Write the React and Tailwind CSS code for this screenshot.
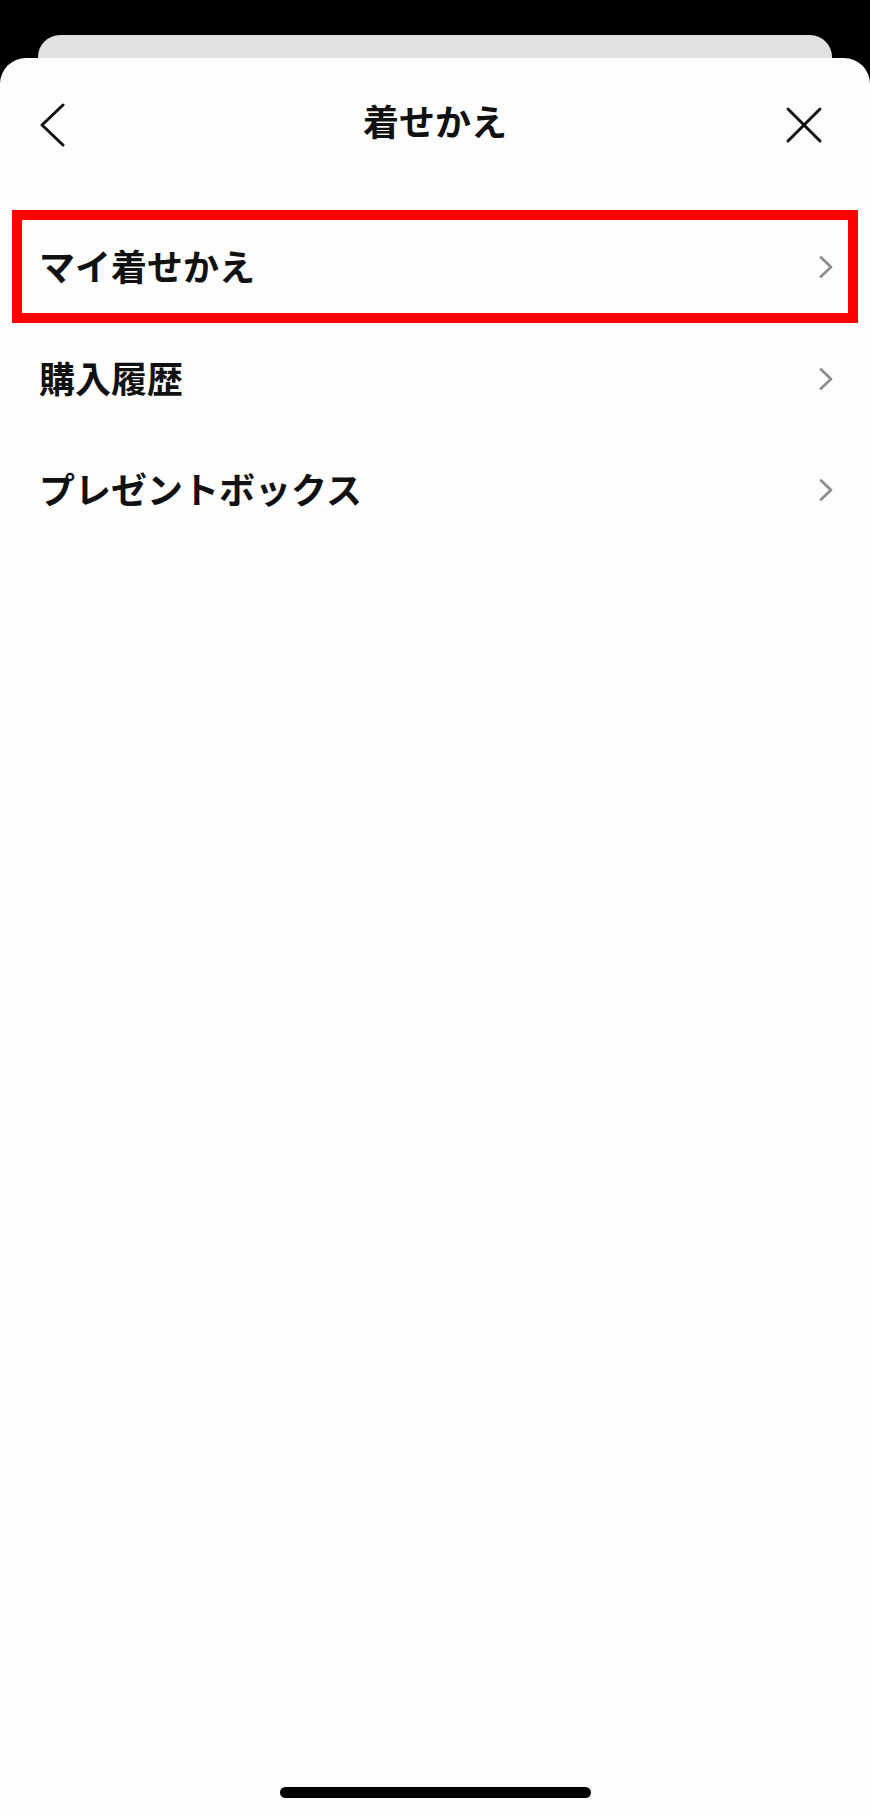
import React from "react";

function Chevron() {
  return (
    <svg width="16" height="24" viewBox="0 0 16 24" fill="none">
      <polyline points="3,2.5 13,12 3,21.5" stroke="#8e8e8e" strokeWidth="2.8" strokeLinecap="round" strokeLinejoin="round" />
    </svg>
  );
}

function Row({ label, boxed }) {
  if (boxed) {
    return (
      <div className="mx-[12px] h-[113px] border-[10px] border-[#ff0000] flex items-center justify-between pl-[17px] pr-[14px]">
        <span className="text-[36px] font-bold text-[#111] leading-none -mt-[4px]">{label}</span>
        <Chevron />
      </div>
    );
  }
  return (
    <div className="h-[111px] flex items-center justify-between pl-[39px] pr-[36px]">
      <span className="text-[36px] font-bold text-[#111] leading-none -mt-[4px]">{label}</span>
      <Chevron />
    </div>
  );
}

export default function App() {
  return (
    <div
      className="w-[870px] h-[1817px] bg-black flex flex-col overflow-hidden"
      style={{ fontFamily: '"Noto Sans CJK JP", "Noto Sans", sans-serif' }}
    >
      <div className="mt-[35px] mx-[38px] h-[40px] bg-[#e0e0e0] rounded-t-[22px] shrink-0" />
      <div className="-mt-[17px] flex-1 bg-[#fdfdfd] rounded-t-[26px] flex flex-col">
        <div className="h-[152px] flex items-start justify-between px-[38px] pt-[44px] relative">
          <svg width="28" height="44" viewBox="0 0 28 44" fill="none" className="mt-[1px]">
            <polyline points="25,2 4,22 25,42" stroke="#111" strokeWidth="3" strokeLinecap="round" strokeLinejoin="round" />
          </svg>
          <div className="absolute left-0 right-0 top-[40px] flex justify-center pointer-events-none">
            <span className="text-[36px] font-bold text-[#111] leading-[44px]">着せかえ</span>
          </div>
          <svg width="38" height="38" viewBox="0 0 38 38" fill="none" className="mt-[4px] mr-[9px]">
            <line x1="3" y1="3" x2="35" y2="35" stroke="#111" strokeWidth="3" strokeLinecap="round" />
            <line x1="35" y1="3" x2="3" y2="35" stroke="#111" strokeWidth="3" strokeLinecap="round" />
          </svg>
        </div>
        <Row label="マイ着せかえ" boxed />
        <Row label="購入履歴" />
        <Row label="プレゼントボックス" />
        <div className="flex-1" />
        <div className="flex justify-center pb-[19px]">
          <div className="w-[311px] h-[11px] rounded-full bg-black" />
        </div>
      </div>
    </div>
  );
}
